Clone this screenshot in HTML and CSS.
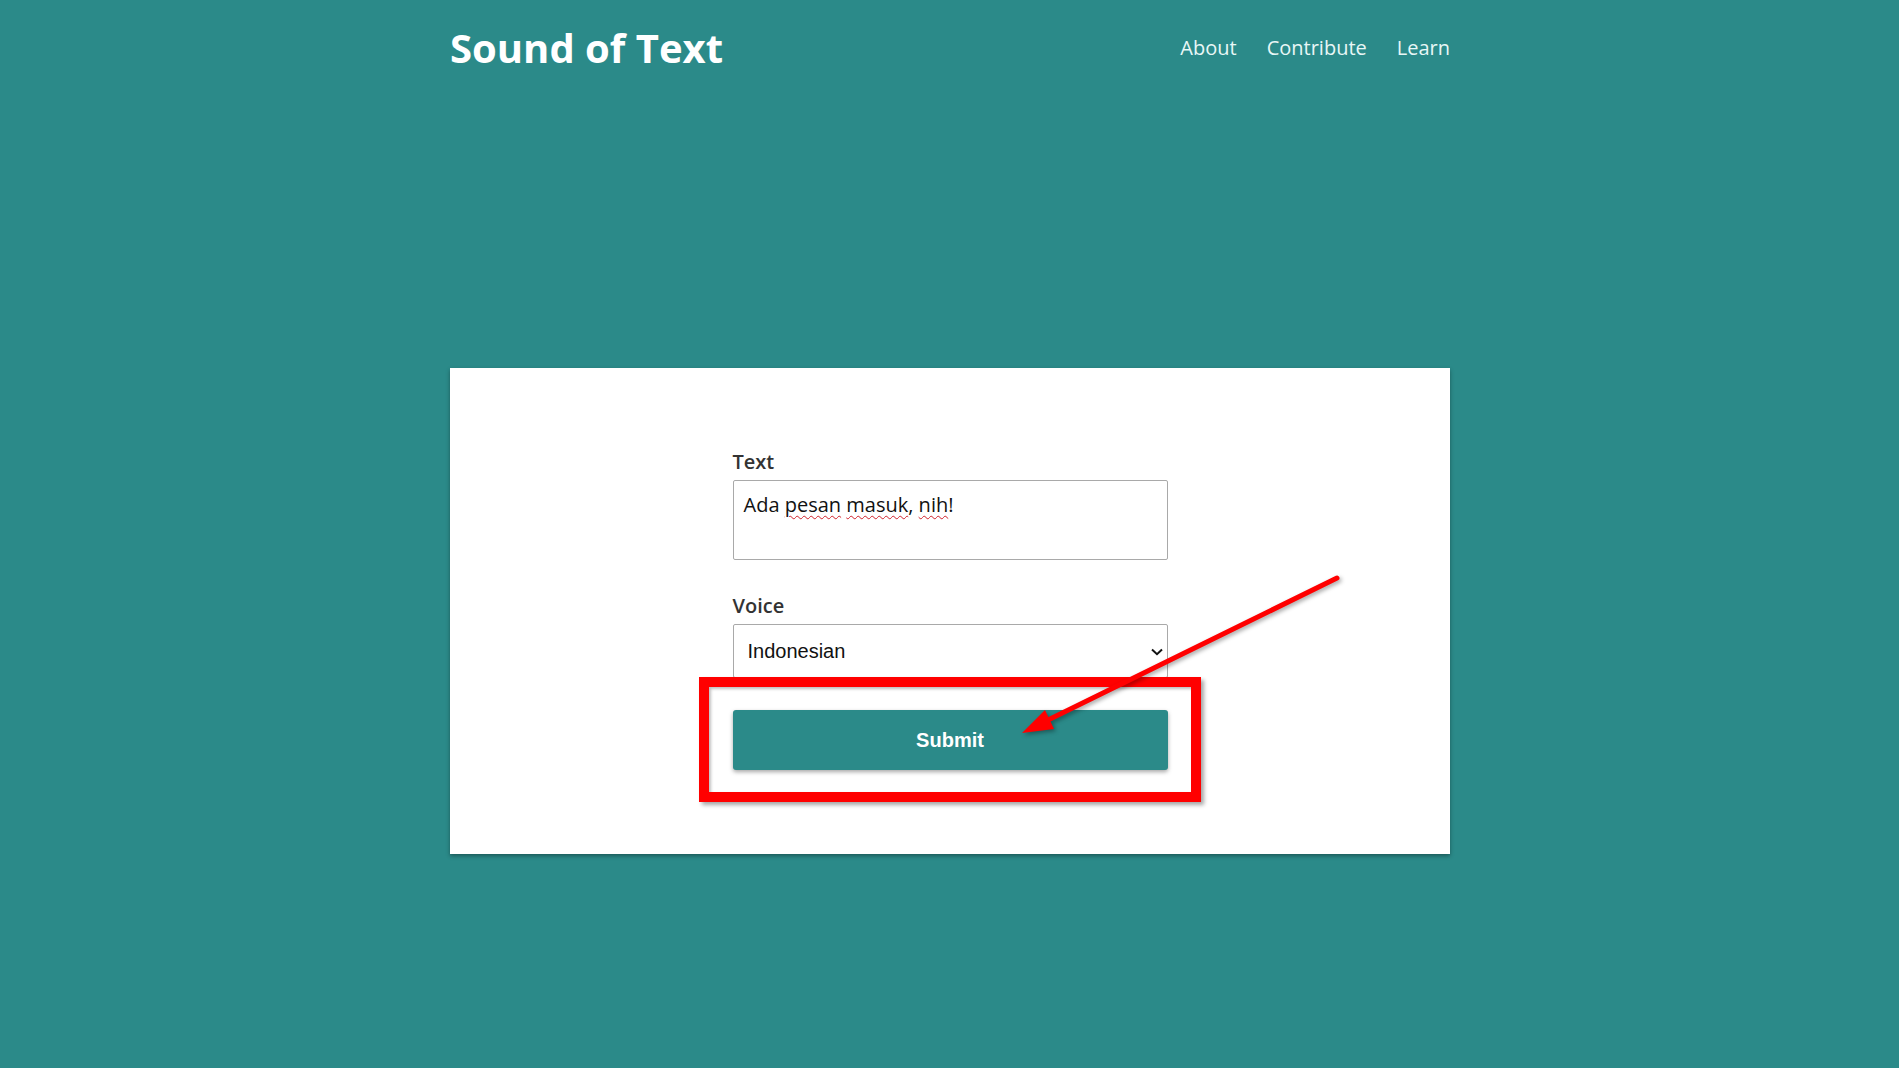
FILE: index.html
```html
<!DOCTYPE html>
<html lang="en">
<head>
<meta charset="utf-8">
<title>Sound of Text</title>
<link rel="stylesheet" href="styles.css">
</head>
<body>
  <header class="site-header">
    <div class="container header-row">
      <h1 class="brand">Sound of Text</h1>
      <nav class="nav">
        <a href="#" class="nav-link">About</a>
        <a href="#" class="nav-link">Contribute</a>
        <a href="#" class="nav-link">Learn</a>
      </nav>
    </div>
  </header>

  <main class="container">
    <section class="card">
      <form class="sound-form">
        <div class="field">
          <label class="field-label">Text</label>
          <div class="textbox" role="textbox"><span>Ada </span><span class="misspelled">pesan</span> <span class="misspelled">masuk</span>, <span class="misspelled">nih</span>!</div>
        </div>
        <div class="field">
          <label class="field-label" for="voice">Voice</label>
          <div class="select-wrap">
            <select id="voice" class="select">
              <option>Indonesian</option>
            </select>
            <svg class="select-chevron" width="12" height="8" viewBox="0 0 12 8"><path d="M1 1.5 L6 6.2 L11 1.5" fill="none" stroke="#111" stroke-width="2"/></svg>
          </div>
        </div>
        <button type="button" class="submit">Submit</button>
      </form>

      <div class="callout-box"></div>
      <svg class="callout-arrow" width="340" height="170" viewBox="560 200 340 170">
        <line x1="887" y1="210" x2="596" y2="353" stroke="#ff0000" stroke-width="5" stroke-linecap="round"/>
        <polygon points="572,365 604,361 595,342" fill="#ff0000"/>
      </svg>
    </section>
  </main>
</body>
</html>
```

FILE: styles.css
```css
html, body {
  margin: 0;
  padding: 0;
}

body {
  background: #2b8a89;
  font-family: "Open Sans", "Noto Sans", sans-serif;
  font-size: 20px;
  color: #333;
  min-height: 1068px;
  padding-left: 1px;
}

.container {
  width: 1000px;
  margin: 0 auto;
}

/* Top bar */
.site-header {
  padding-top: 20px;
}

.header-row {
  display: flex;
  justify-content: space-between;
  align-items: center;
}

.brand {
  margin: 0;
  font-size: 40px;
  font-weight: 700;
  color: #ffffff;
  line-height: normal;
}

.nav {
  display: flex;
  gap: 30px;
}

.nav-link {
  color: #e8f7f6;
  text-decoration: none;
  font-size: 20px;
  line-height: normal;
}

/* Form card */
.card {
  position: relative;
  margin-top: 293px;
  background: #ffffff;
  padding: 80px 0 84px;
  box-shadow: 0 2px 4px rgba(0, 0, 0, 0.35);
}

.sound-form {
  width: 435px;
  margin: 0 auto;
  display: flex;
  flex-direction: column;
}

.field {
  display: flex;
  flex-direction: column;
  gap: 5px;
  margin-bottom: 32px;
}

.field-label {
  font-weight: 600;
  font-size: 20px;
  line-height: normal;
  color: #333;
}

.textbox {
  box-sizing: border-box;
  height: 80px;
  padding: 10px;
  border: 1px solid #a9a9a9;
  border-radius: 2px;
  color: #111;
  font-size: 20px;
  line-height: normal;
  background: #fff;
}

.misspelled {
  text-decoration: underline wavy #d0202a;
  text-decoration-thickness: 1px;
  text-underline-offset: 3px;
}

.select-wrap {
  position: relative;
}

.select {
  appearance: none;
  -webkit-appearance: none;
  box-sizing: border-box;
  width: 100%;
  height: 54px;
  padding: 0 30px 0 14px;
  border: 1px solid #a9a9a9;
  border-radius: 2px;
  background: #fff;
  font-family: "Liberation Sans", Arial, sans-serif;
  font-size: 20px;
  color: #111;
}

.select-chevron {
  position: absolute;
  right: 5px;
  top: 24px;
}

.submit {
  height: 60px;
  border: none;
  border-radius: 3px;
  background: #2b8a89;
  color: #ffffff;
  font-family: "Liberation Sans", Arial, sans-serif;
  font-weight: 700;
  font-size: 20px;
  box-shadow: 0 2px 4px rgba(0, 0, 0, 0.35);
}

/* Red highlight annotation around the submit button */
.callout-box {
  position: absolute;
  left: 249px;
  top: 309px;
  width: 502px;
  height: 125px;
  box-sizing: border-box;
  border: 10px solid #ff0000;
  box-shadow: 3px 3px 4px rgba(0, 0, 0, 0.35), inset 2px 2px 3px rgba(0, 0, 0, 0.25);
  pointer-events: none;
}

.callout-arrow {
  position: absolute;
  left: 560px;
  top: 200px;
  overflow: visible;
  filter: drop-shadow(2px 2px 2px rgba(0, 0, 0, 0.35));
  pointer-events: none;
}
```
